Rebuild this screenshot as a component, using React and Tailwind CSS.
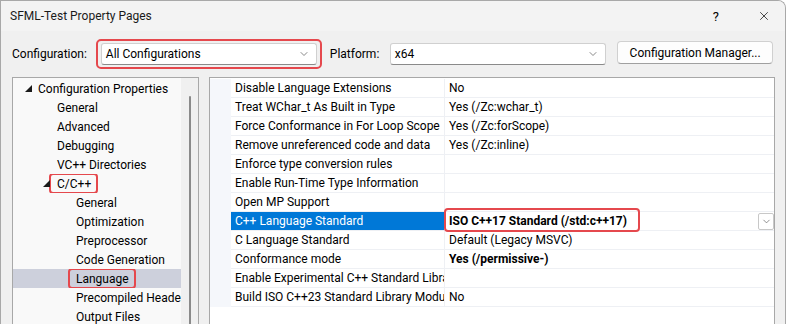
import { ChevronDown, X } from 'lucide-react';

const TREE = [
  { label: 'Configuration Properties', level: 0, open: true },
  { label: 'General', level: 1 },
  { label: 'Advanced', level: 1 },
  { label: 'Debugging', level: 1 },
  { label: 'VC++ Directories', level: 1 },
  { label: 'C/C++', level: 1, open: true, mark: true },
  { label: 'General', level: 2 },
  { label: 'Optimization', level: 2 },
  { label: 'Preprocessor', level: 2 },
  { label: 'Code Generation', level: 2 },
  { label: 'Language', level: 2, selected: true, mark: true },
  { label: 'Precompiled Headers', level: 2 },
  { label: 'Output Files', level: 2 },
  { label: 'Browse Information', level: 2 },
];

const PROPS = [
  ['Disable Language Extensions', 'No'],
  ['Treat WChar_t As Built in Type', 'Yes (/Zc:wchar_t)'],
  ['Force Conformance in For Loop Scope', 'Yes (/Zc:forScope)'],
  ['Remove unreferenced code and data', 'Yes (/Zc:inline)'],
  ['Enforce type conversion rules', ''],
  ['Enable Run-Time Type Information', ''],
  ['Open MP Support', ''],
  ['C++ Language Standard', 'ISO C++17 Standard (/std:c++17)', 'selected'],
  ['C Language Standard', 'Default (Legacy MSVC)'],
  ['Conformance mode', 'Yes (/permissive-)', 'bold'],
  ['Enable Experimental C++ Standard Library Modules', ''],
  ['Build ISO C++23 Standard Library Modules', 'No'],
];

const PAD = ['pl-[25px]', 'pl-[44px]', 'pl-[63px]'];
const ARROW = ['left-[12px]', 'left-[30px]', 'left-[49px]'];

function Expander({ className }) {
  return (
    <svg width="7" height="7" viewBox="0 0 7 7" className={`absolute top-[6px] ${className}`}>
      <polygon points="7,0 7,7 0,7" fill="#1a1a1a" />
    </svg>
  );
}

function Select({ value, width }) {
  return (
    <div className={`${width} h-[22px] bg-white border border-[#d0d0d0] border-b-[#8a8a8a] rounded-[3px] flex items-center justify-between pl-[4px] pr-[6px]`}>
      <span>{value}</span>
      <ChevronDown className="w-[12px] h-[12px] text-[#606060]" strokeWidth={1.5} />
    </div>
  );
}

export default function App() {
  return (
    <div className="w-[786px] h-[324px] overflow-hidden bg-[#f0f0f0] border border-b-0 border-[#a8a8a8] rounded-tr-[8px] font-['Roboto',sans-serif] text-[12px] text-black leading-none">
      {/* Title bar */}
      <div className="h-[30px] bg-[#f3f3f3] flex items-center justify-between pl-[9px] pr-[14px]">
        <span className="text-[#1a1a1a]">SFML-Test Property Pages</span>
        <div className="flex items-center gap-[38px]">
          <span className="text-[13px]">?</span>
          <X className="w-[14px] h-[14px]" strokeWidth={1.2} />
        </div>
      </div>

      {/* Configuration row */}
      <div className="h-[46px] flex items-center pl-[11px] pr-[12px]">
        <span className="w-[84px]">Configuration:</span>
        <div className="border-2 border-[#e5484d] rounded-[5px] px-[3px] py-[2px]">
          <Select value="All Configurations" width="w-[216px]" />
        </div>
        <span className="ml-[8px] w-[60px]">Platform:</span>
        <Select value="x64" width="w-[217px]" />
        <button className="ml-[11px] h-[23px] w-[156px] bg-[#fdfdfd] border border-[#d0d0d0] border-b-[#a0a0a0] rounded-[4px] -mt-[3px]">
          Configuration Manager...
        </button>
      </div>

      <div className="flex pl-[11px] gap-[10px] h-[248px]">
        {/* Tree */}
        <div className="w-[187px] h-[260px] bg-[#f9f9f9] border border-[#a8a8a8] flex">
          <div className="flex-1 min-w-0 pt-[1px]">
            {TREE.map((t, i) => (
              <div
                key={i}
                className={`relative h-[19px] flex items-center whitespace-nowrap overflow-hidden ${PAD[t.level]} ${t.selected ? 'bg-[#cdd0dc]' : ''}`}
              >
                {t.open && <Expander className={ARROW[t.level]} />}
                {t.mark ? (
                  <span className="inline-flex items-center h-[21px] border-2 border-[#e5484d] rounded-[4px] pl-[6px] pr-[5px] -ml-[8px]">{t.label}</span>
                ) : (
                  <span>{t.label}</span>
                )}
              </div>
            ))}
          </div>
          <div className="w-[17px] shrink-0 bg-[#f0f0f0] flex justify-center pt-[18px]">
            <div className="w-[2px] h-[240px] bg-[#8a8a8a] rounded-full" />
          </div>
        </div>

        {/* Property grid */}
        <div className="w-[566px] h-[260px] bg-white border border-[#a8a8a8] flex flex-col">
          <div className="flex pt-[1px]">
            <div className="w-[21px] bg-[#f5f7fb]" />
            <div className="flex-1">
              {PROPS.map(([name, value, kind], i) => (
                <div key={i} className="h-[19px] flex border-b border-[#eef0f4]">
                  <div
                    className={`w-[214px] pl-[4px] flex items-center whitespace-nowrap overflow-hidden border-r border-[#eef0f4] ${kind === 'selected' ? 'bg-[#0078d7] text-white' : ''}`}
                  >
                    {name}
                  </div>
                  <div className="relative flex-1 pl-[4px] flex items-center justify-between whitespace-nowrap">
                    <span className={kind === 'selected' || kind === 'bold' ? 'font-bold' : ''}>{value}</span>
                    {kind === 'selected' && (
                      <>
                        <span className="absolute left-[-1px] top-[-4px] w-[196px] h-[24px] border-2 border-[#e5484d] rounded-[4px]" />
                        <span className="w-[16px] h-[17px] border border-[#c8c8c8] rounded-[2px] flex items-center justify-center">
                          <ChevronDown className="w-[11px] h-[11px] text-[#606060]" strokeWidth={1.5} />
                        </span>
                      </>
                    )}
                  </div>
                </div>
              ))}
            </div>
          </div>
        </div>
      </div>
    </div>
  );
}
